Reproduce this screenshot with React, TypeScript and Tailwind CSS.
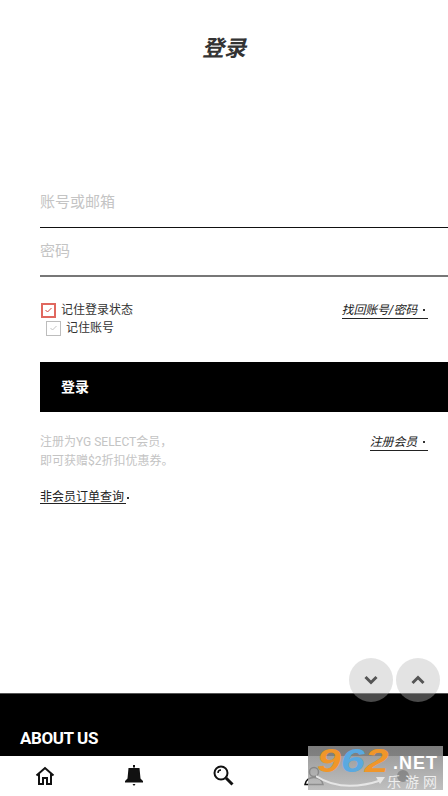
const cjk = "font-['Roboto','Noto_Sans_CJK_SC',sans-serif]";

const CheckBox = ({ red }: { red?: boolean }) => (
  <span
    className={
      red
        ? "flex h-[15px] w-[15px] items-center justify-center border-2 border-[#e0685f] bg-white"
        : "flex h-[15px] w-[15px] items-center justify-center border border-[#bdbdbd] bg-white"
    }>
    <svg width="9" height="8" viewBox="0 0 9 8" fill="none">
      <path
        d="M1.5 4l2 2 4-4"
        stroke={red ? "#d4483e" : "#c4c4c4"}
        strokeWidth="1"
      />
    </svg>
  </span>
);

const TextLink = ({ label, width }: { label: string; width: string }) => (
  <a className={`flex h-[18px] items-center justify-end whitespace-nowrap border-b border-[#222] text-[12px] italic tracking-[-0.2px] text-[#222] ${width}`}>
    <span>{label}</span>
    <span className="ml-[6px] mr-[3px] h-[2px] w-[2px] shrink-0 bg-[#333]"></span>
  </a>
);

export default function App() {
  return (
    <div className={`relative flex h-[796px] w-[448px] flex-col overflow-hidden bg-white ${cjk}`}>
      <div className="flex h-[179px] shrink-0 justify-center pt-[34px]">
        <h1 className="text-[22px] font-bold italic leading-[30px] text-[#333]">登录</h1>
      </div>

      <div className="flex-1 pl-10">
        <div className="flex h-[49px] items-center border-b border-[#111] pb-[1px] text-[15px] text-[#c4c4c4]">
          账号或邮箱
        </div>
        <div className="flex h-[49px] items-center border-b-2 border-[#777] pb-[1px] text-[15px] text-[#c4c4c4]">
          密码
        </div>

        <div className="mt-[24px] flex h-[36px] justify-between pr-5">
          <div className="text-[12px] leading-[18px] text-[#333]">
            <div className="flex items-center gap-[5px] pl-px">
              <CheckBox red />
              <span>记住登录状态</span>
            </div>
            <div className="flex items-center gap-[5px] pl-[6px]">
              <CheckBox />
              <span>记住账号</span>
            </div>
          </div>
          <TextLink label="找回账号/密码" width="w-[86px]" />
        </div>

        <button className="mt-[25px] flex h-[50px] w-full items-center bg-black pl-[21px] text-[14px] font-bold text-white">
          登录
        </button>

        <div className="mt-[21px] flex justify-between pr-5">
          <p className="text-[12px] leading-[19px] text-[#c4c4c4]">
            注册为YG SELECT会员，
            <br />
            即可获赠$2折扣优惠券。
          </p>
          <TextLink label="注册会员" width="w-[58px]" />
        </div>

        <div className="mt-[20px] flex items-start text-[12px] text-[#222]">
          <span className="border-b border-[#222] pr-[2px] leading-[12px]">非会员订单查询</span>
          <span className="ml-[1px] mt-[6px] h-[2px] w-[2px] bg-[#333]"></span>
        </div>
      </div>

      <footer className="flex h-[63px] shrink-0 items-end border-t border-[#555] bg-black pb-[8px] pl-5">
        <span className="font-['Roboto',sans-serif] text-[17px] font-bold leading-[20px] tracking-[-0.4px] text-white">ABOUT US</span>
      </footer>

      <nav className="grid h-[40px] shrink-0 grid-cols-5 items-center justify-items-center bg-white pb-[1px]">
        <svg width="20" height="20" viewBox="0 0 20 20" fill="none" stroke="#111" strokeWidth="2">
          <path d="M1.500 9.500L10 2l8.500 7.500M4 8v10h4v-6h4v6h4V8" />
        </svg>
        <svg width="18" height="21" viewBox="0 0 18 21" fill="#111">
          <path d="M8 0h2v2.500H8zM3.500 3h11l1 10.500L18 16v1.500H0V16l2.500-2.500zM7.500 19h3L9 21z" />
        </svg>
        <svg width="21" height="21" viewBox="0 0 21 21" fill="none" stroke="#111" strokeWidth="2">
          <circle cx="8" cy="8" r="6.500" />
          <path d="M5 8a3 3 0 0 1 3-3" strokeWidth="1.500" />
          <path d="M13 13l6.500 6.500" strokeWidth="3" />
        </svg>
        <svg width="20" height="20" viewBox="0 0 20 20" fill="none" stroke="#111" strokeWidth="1.500">
          <circle cx="10" cy="6" r="4.500" />
          <path d="M1 18.500c1-5 5-7 9-7s8 2 9 7z" />
        </svg>
        <svg width="20" height="20" viewBox="0 0 20 20" fill="#111">
          <circle cx="10" cy="10" r="6" />
        </svg>
      </nav>

      {/* floating scroll buttons */}
      <div className="absolute left-[349px] top-[658px] flex gap-[3px]">
        <button className="flex h-11 w-11 items-center justify-center rounded-full bg-[#b8b8b8]/40">
          <svg width="14" height="10" viewBox="0 0 14 10" fill="none" stroke="#555" strokeWidth="3">
            <path d="M1.500 2L7 7.500 12.500 2" />
          </svg>
        </button>
        <button className="flex h-11 w-11 items-center justify-center rounded-full bg-[#b8b8b8]/40">
          <svg width="14" height="10" viewBox="0 0 14 10" fill="none" stroke="#555" strokeWidth="3">
            <path d="M1.500 8L7 2.500 12.500 8" />
          </svg>
        </button>
      </div>

      {/* watermark */}
      <div className="absolute left-[308px] top-[746px] h-[44px] w-[135px] bg-gradient-to-b from-[#8a8a8a]/90 to-[#b0b0b0]/80">
        <div className="absolute left-[9px] top-[-2px] origin-left scale-x-[1.3] font-['Liberation_Sans',sans-serif] text-[33px] font-bold italic leading-[34px]">
          <span className="text-[#f0962a]">9</span>
          <span className="text-[#5aa9e0]">6</span>
          <span className="text-[#f0962a]">2</span>
        </div>
        <span className="absolute left-[85px] top-[7px] font-['Liberation_Sans',sans-serif] text-[18px] font-bold leading-[20px] tracking-[1px] text-white">.NET</span>
        <span className="absolute left-[79px] top-[29px] text-[14px] leading-[14px] tracking-[4px] text-[#eeeeee]">乐游网</span>
        <svg className="absolute left-[8px] top-[28px]" width="70" height="14" viewBox="0 0 70 14" fill="none">
          <path d="M0 2c18 12 42 12 66 4" stroke="#e6e6e6" strokeWidth="2" />
          <path d="M60 3l9 0-5 7z" fill="#e6e6e6" />
        </svg>
      </div>
    </div>
  );
}
